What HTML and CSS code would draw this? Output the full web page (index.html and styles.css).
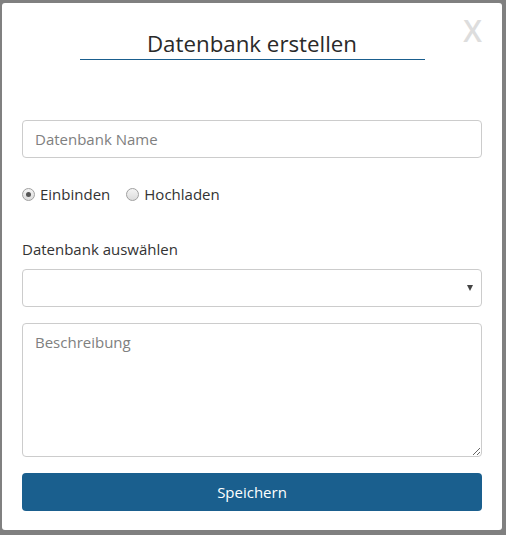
FILE: index.html
```html
<!DOCTYPE html>
<html lang="de">
<head>
<meta charset="utf-8">
<title>Datenbank erstellen</title>
<link rel="stylesheet" href="styles.css">
</head>
<body>
<div class="modal">
  <span class="close">X</span>
  <div class="head">
    <h2 class="title">Datenbank erstellen</h2>
  </div>
  <form class="form">
    <input class="field" type="text" placeholder="Datenbank Name">
    <div class="radios">
      <label class="radio"><input type="radio" name="mode" checked> Einbinden</label>
      <label class="radio"><input type="radio" name="mode"> Hochladen</label>
    </div>
    <label class="label">Datenbank auswählen</label>
    <div class="select">
      <span class="caret"></span>
    </div>
    <textarea class="area" placeholder="Beschreibung"></textarea>
    <button class="btn" type="button">Speichern</button>
  </form>
</div>
</body>
</html>
```
FILE: styles.css
```css
html, body {
  margin: 0;
  padding: 0;
  background: #808080;
  width: 506px;
  height: 535px;
  overflow: hidden;
}
body {
  font-family: "Open Sans", "Noto Sans", sans-serif;
  color: #333;
}
.modal {
  position: relative;
  box-sizing: border-box;
  margin: 3px 4px 0 2px;
  width: 500px;
  height: 527px;
  background: #fff;
  border-radius: 3px;
  padding: 0 20px;
}
.close {
  position: absolute;
  top: 10px;
  right: 20px;
  font-size: 30px;
  font-weight: 600;
  color: #ddd;
  line-height: 36px;
}
.head {
  display: flex;
  justify-content: center;
  padding-top: 25px;
}
.title {
  margin: 0;
  width: 345px;
  text-align: center;
  font-size: 22.3px;
  font-weight: 400;
  line-height: 31px;
  color: #2a2a2a;
  border-bottom: 1px solid #1a5e8e;
}
.form {
  display: flex;
  flex-direction: column;
  margin-top: 60px;
}
.field, .select, .area {
  box-sizing: border-box;
  width: 460px;
  border: 1px solid #ccc;
  border-radius: 4px;
  font-family: inherit;
  font-size: 15px;
  padding: 6px 12px;
  background: #fff;
  color: #333;
}
.field {
  height: 38px;
}
.field::placeholder, .area::placeholder {
  color: #808080;
}
.radios {
  display: flex;
  gap: 16px;
  margin-top: 25px;
  font-size: 15px;
  height: 22px;
  align-items: center;
}
.radio {
  display: flex;
  align-items: center;
  gap: 5px;
}
.radio input {
  appearance: none;
  -webkit-appearance: none;
  box-sizing: border-box;
  margin: 0;
  width: 13px;
  height: 13px;
  border: 1px solid #a0a0a0;
  border-radius: 50%;
  background: linear-gradient(#f4f4f4, #dcdcdc);
  position: relative;
}
.radio input:checked::after {
  content: "";
  position: absolute;
  left: 3px;
  top: 3px;
  width: 5px;
  height: 5px;
  border-radius: 50%;
  background: #555;
}
.label {
  margin-top: 34px;
  font-size: 15px;
  line-height: 20px;
}
.select {
  margin-top: 10px;
  height: 38px;
  position: relative;
}
.caret {
  position: absolute;
  right: 8px;
  top: 15px;
  width: 0;
  height: 0;
  border-left: 3px solid transparent;
  border-right: 3px solid transparent;
  border-top: 6px solid #444;
}
.area {
  margin-top: 16px;
  height: 134px;
  resize: vertical;
  padding: 8px 12px;
}
.btn {
  margin-top: 16px;
  height: 38px;
  width: 460px;
  border: 0;
  border-radius: 4px;
  background: #1a5f8e;
  color: #fff;
  font-family: inherit;
  font-size: 15px;
}
```
